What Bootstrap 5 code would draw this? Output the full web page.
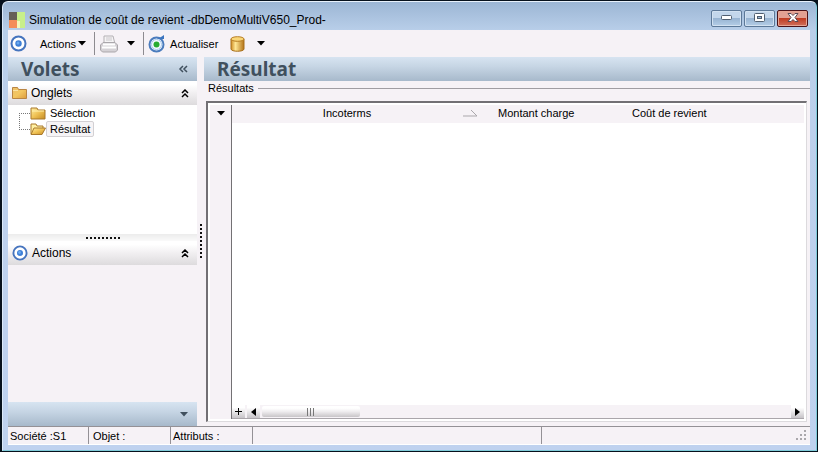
<!DOCTYPE html>
<html lang="fr">
<head>
<meta charset="utf-8">
<meta name="viewport" content="width=device-width, initial-scale=1">
<title>Simulation de coût de revient</title>
<link href="https://cdn.jsdelivr.net/npm/bootstrap@5.3.0/dist/css/bootstrap.min.css" rel="stylesheet">
<style>
body{background:#07111c;font:11px/16px "Liberation Sans",Arial,sans-serif;color:#000;padding:1px 1px 1px 2px}
svg{display:block;flex:none}
button{border:0;padding:0;background:none;color:inherit;font:inherit}
.app-window{background:linear-gradient(#9cb6d4 0,#b8cee9 28px,#bcd0ec 118px,#bfd2ef);border-radius:6px 6px 0 0;border:1px solid #7fcbd9;border-top-color:#e8f1fb;border-left-color:#dce9f8;padding:0 6px 5px 5px}
.title-bar{height:28px;font-size:12px;padding:0 2px 0 1px}
.title-bar h1{font:inherit;margin:0}
.win-btns{gap:2px}
.win-btn{width:31px;height:17px;border:1px solid #5c7898;border-radius:2px;background:linear-gradient(#c3d6eb 0 48%,#98b4d2 50%,#b4cde7);box-shadow:inset 0 0 0 1px #d2e1f1}
.win-close{border-color:#4b1218;background:linear-gradient(#e2a092 0 45%,#c03c22 50%,#d0705c);box-shadow:inset 0 0 0 1px #e6a594}
.surface{background:#f6f2f6}
.tool-bar{height:27px;padding-left:2px}
.menu-btn{margin-left:13px;gap:2px}
.tool-sep{width:1px;height:23px;background:#8d8b90}
.head-band{height:24px;background:linear-gradient(#d7e4f1,#c6d5e4 40%,#a7b9cb);color:#40505e}
.head-band h2{font:bold 19px/24px "Noto Sans","Open Sans",sans-serif;margin:0 0 0 5px}
.side{width:189px}
.group-head{height:24px;background:linear-gradient(#fff 15%,#f1eff1 50%,#dddbdd);font-size:12px}
.group-head h3{font:inherit;margin:0}
.tree-area{height:129px}
.tree-list{margin:0 0 0 11px;padding:0;list-style:none}
.tree-list li{height:16px}
.tree-list button{height:16px;padding:0 3px;border:1px solid transparent;line-height:14px;border-radius:2px}
.tree-list button.current{background:#f6f4f6;border-color:#d3d0d3}
.h-grip{height:7px;background:linear-gradient(#ececec,#fafafa)}
.v-grip{width:7px}
.results{margin:6px 3px 4px 2px;border:solid;border-width:2px 1px 1px 2px;border-color:#727074 #dcdadd #dcdadd #727074;padding:2px}
.legend-text{height:14px;line-height:14px}
.legend-line{height:1px;background:#a09da2}
.row-strip{width:22px;border-right:1px solid #737174;padding-top:6px}
.grid-table{table-layout:fixed;line-height:16px}
.grid-table th{font-weight:400;padding:0 0 2px;background:#f6f2f6;height:18px}
.col-terms{width:254px}
.col-amount{width:134px}
.scroll-row{height:14px;border-bottom:1px solid #aaa6ab}
.mini-btn{width:13px;height:13px;background:linear-gradient(#fff 20%,#c7c4c8);display:grid;place-items:center}
.slide-left{margin-left:2px}
.thumb{width:98px;height:11px;background:linear-gradient(#fff 20%,#efedef 50%,#c8c5c8);border-radius:2px;margin-left:2px}
.status{height:19px;border-top:1px solid #949196;border-bottom:1px solid #fff;line-height:18px}
.status>div{border-left:1px solid #949196;padding-left:2px}
.status>.s-one{width:80px;border-left:0}.s-two{width:82px}.s-three{width:82px}.s-four{width:289px}
</style>
<script src="https://cdn.jsdelivr.net/npm/bootstrap@5.3.0/dist/js/bootstrap.bundle.min.js"></script>
</head>
<body class="vh-100 overflow-hidden d-flex">
<svg width="0" height="0" class="position-absolute" aria-hidden="true">
<defs>
<linearGradient id="gold" x1="0" y1="0" x2="1" y2="1"><stop stop-color="#fff0a2"/><stop offset=".5" stop-color="#efc154"/><stop offset="1" stop-color="#c58b22"/></linearGradient>
<linearGradient id="amber" x1="0" y1="0" x2="1" y2="1"><stop stop-color="#ecc069"/><stop offset=".5" stop-color="#f3c660"/><stop offset="1" stop-color="#dd9c3c"/></linearGradient>
<linearGradient id="drum" x1="0" x2="1"><stop stop-color="#cf8d24"/><stop offset=".35" stop-color="#ffe795"/><stop offset="1" stop-color="#b47317"/></linearGradient>
<symbol id="target" viewBox="0 0 17 17"><circle cx="8.500" cy="8.500" r="7" fill="#fff" stroke="#4674be" stroke-width="2"/><circle cx="8.500" cy="8.500" r="3.200" fill="#3f7fd6"/><circle cx="8" cy="8" r="1.500" fill="#69a9ef"/></symbol>
<symbol id="folder" viewBox="0 0 16 14"><path d="M1 3V2h6l1 2h7v9H1z" fill="url(#gold)" stroke="#a9792c"/><path d="M2 5h12" stroke="#fff1b2"/></symbol>
<symbol id="dblup" viewBox="0 0 7 9"><path d="M0.500 4 3.500 1 6.500 4M0.500 8 3.500 5 6.500 8" fill="none" stroke="#000" stroke-width="1.500"/></symbol>
<symbol id="down" viewBox="0 0 8 5"><path d="M0 0h8L4 4.500z" fill="currentColor"/></symbol>
</defs>
</svg>
<main class="app-window flex-fill d-flex flex-column">
<header class="title-bar d-flex align-items-center">
<svg width="16" height="16" class="mt-2 me-1"><path d="M0 0h8v8H0z" fill="#665f58"/><path d="M0 8h8v8H0z" fill="#f58e59"/><path d="M8 0h8v16H8z" fill="#c8ef8a"/><path d="M8 9h3v7H8z" fill="#f6f8ba"/></svg>
<h1 class="mt-2 flex-fill">Simulation de coût de revient -dbDemoMultiV650_Prod-</h1>
<div class="win-btns d-flex mt-1">
<button class="win-btn d-grid" aria-label="Réduire"><svg class="m-auto" width="12" height="6"><rect x=".5" y=".5" width="10" height="4" rx="1" fill="#fff" stroke="#505e70"/></svg></button>
<button class="win-btn d-grid" aria-label="Agrandir"><svg class="m-auto" width="12" height="10"><rect x=".5" y=".5" width="10" height="8" rx="1" fill="#fff" stroke="#505e70"/><rect x="3.500" y="3.500" width="4" height="2" fill="#9db8d6" stroke="#505e70"/></svg></button>
<button class="win-btn win-close d-grid" aria-label="Fermer"><svg class="m-auto" width="12" height="10"><path d="M1 .5h3l2 2 2-2h3L8 4.500l3 4H8l-2-2-2 2H1l3-4z" fill="#fff" stroke="#594a55"/></svg></button>
</div>
</header>
<div class="surface flex-fill d-flex flex-column">
<nav class="tool-bar d-flex align-items-center" aria-label="Outils">
<button class="d-flex align-items-center" aria-label="Cible"><svg width="17" height="17"><use href="#target"/></svg></button>
<button class="menu-btn d-flex align-items-center">Actions<svg width="8" height="5"><use href="#down"/></svg></button>
<span class="tool-sep ms-2"></span>
<button class="ms-1" aria-label="Imprimer"><svg width="20" height="18"><path d="M5 9V1h9l2 8z" fill="#f5f4f5" stroke="#b3b0b4"/><path d="M7 3h6M7 5h6" stroke="#cac7cb"/><path d="M1.500 10 4 7.500h12l2.500 2.500v5l-2 2h-13l-2-2z" fill="#d5d2d6" stroke="#aaa7ab"/><path d="M4 9.500h12M3 12.500h14" stroke="#fff" stroke-width="2"/></svg></button>
<button class="ms-2" aria-label="Options d’impression"><svg width="8" height="5"><use href="#down"/></svg></button>
<span class="tool-sep ms-2 me-1"></span>
<button class="d-flex align-items-center gap-1"><svg width="18" height="18"><circle cx="8.500" cy="9.500" r="7" fill="#f6faff" stroke="#4b7cbd" stroke-width="2"/><circle cx="8.500" cy="9.500" r="5" fill="none" stroke="#a7c9ec"/><circle cx="8.500" cy="9.500" r="3" fill="#28ac31"/><path d="M9 4h7V0l-3 2z" fill="#3b75bf"/></svg>Actualiser</button>
<button class="ms-2 ps-1" aria-label="Base de données"><svg width="15" height="16"><path d="M1 3v10c0 3 13 3 13 0V3z" fill="url(#drum)" stroke="#a8701c"/><ellipse cx="7.500" cy="3" rx="6.500" ry="2.300" fill="#f9d678" stroke="#b77d23"/></svg></button>
<button class="ms-2 ps-1" aria-label="Options des données"><svg width="8" height="5"><use href="#down"/></svg></button>
</nav>
<div class="d-flex flex-fill">
<aside class="side d-flex flex-column flex-shrink-0">
<div class="head-band d-flex align-items-center ps-2"><h2 class="flex-fill">Volets</h2><button class="me-2" aria-label="Masquer"><svg width="11" height="8"><path d="m5 1-3 3 3 3M9 1 6 4l3 3" fill="none" stroke="#40505e" stroke-width="1.500"/></svg></button></div>
<div class="group-head d-flex align-items-center px-1 gap-1"><svg width="15" height="14"><path d="M.5 12.500v-11h5l1 2h8v9z" fill="url(#amber)" stroke="#b98543"/><path d="M1 4.500h5" stroke="#fbe3a2"/></svg><h3 class="flex-fill">Onglets</h3><button class="me-1" aria-label="Replier les onglets"><svg width="8" height="9"><use href="#dblup"/></svg></button></div>
<div class="tree-area bg-white">
<ul class="tree-list">
<li class="d-flex align-items-center"><svg width="11" height="16"><path d="M.5 8v8M0 8.500h11" stroke="#777" stroke-dasharray="1 1"/></svg><svg width="16" height="14"><use href="#folder"/></svg><button class="ms-0">Sélection</button></li>
<li class="d-flex align-items-center"><svg width="11" height="16"><path d="M.5 0v8M0 8.500h11" stroke="#777" stroke-dasharray="1 1"/></svg><svg width="16" height="14"><path d="M1 12V2h5l1 2h6v3" fill="#fff0a2" stroke="#a9792c"/><path d="M1 12.500 4 6h11.500L12 12.500z" fill="url(#gold)" stroke="#a9792c"/></svg><button class="current">Résultat</button></li>
</ul>
</div>
<div class="h-grip d-grid"><svg class="m-auto" width="36" height="2"><path d="M1 1h35" stroke="#111" stroke-width="2" stroke-dasharray="2 2"/></svg></div>
<div class="group-head d-flex align-items-center px-1 gap-1"><svg width="16" height="16"><use href="#target"/></svg><h3 class="flex-fill">Actions</h3><button class="me-1" aria-label="Replier les actions"><svg width="8" height="9"><use href="#dblup"/></svg></button></div>
<div class="flex-fill"></div>
<div class="head-band d-flex align-items-center justify-content-end"><button class="me-2" aria-label="Plus de volets"><svg width="10" height="5"><use href="#down"/></svg></button></div>
</aside>
<div class="v-grip d-grid flex-shrink-0"><svg class="m-auto" width="2" height="36"><path d="M1 0v36" stroke="#111" stroke-width="2" stroke-dasharray="2 2"/></svg></div>
<section class="flex-fill d-flex flex-column">
<div class="head-band d-flex ps-2"><h2>Résultat</h2></div>
<div class="d-flex align-items-center ps-1 gap-1"><div class="legend-text">Résultats</div><div class="legend-line flex-fill"></div></div>
<div class="results bg-white flex-fill d-flex">
<div class="row-strip surface d-flex flex-shrink-0 justify-content-center align-items-start"><button class="d-flex" aria-label="Options de la grille"><svg width="8" height="5"><use href="#down"/></svg></button></div>
<div class="flex-fill d-flex flex-column">
<table class="grid-table w-100">
<colgroup><col class="col-terms"><col class="col-amount"><col></colgroup>
<thead><tr><th><div class="d-flex align-items-center me-2"><span class="w-100 text-center">Incoterms</span><svg width="16" height="8"><path d="m9 1 6 6H1" fill="none" stroke="#aaa7ab"/></svg></div></th><th class="ps-2"><span class="ps-1">Montant charge</span></th><th class="ps-2"><span class="ps-1">Coût de revient</span></th></tr></thead>
</table>
<div class="flex-fill"></div>
<div class="scroll-row surface d-flex align-items-center">
<button class="mini-btn" aria-label="Ajouter"><svg width="7" height="7"><path d="M3.500 0v7M0 3.500h7" stroke="#000"/></svg></button>
<button class="mini-btn slide-left" aria-label="Défiler à gauche"><svg width="5" height="8"><path d="M5 0v8L0 4z"/></svg></button>
<div class="thumb d-grid"><svg class="m-auto" width="8" height="8"><path d="M.5 0v8M3.500 0v8M6.500 0v8" stroke="#777"/></svg></div>
<button class="mini-btn ms-auto" aria-label="Défiler à droite"><svg width="5" height="8"><path d="M0 0v8l5-4z"/></svg></button>
</div>
</div>
</div>
</section>
</div>
<footer class="status d-flex">
<div class="s-one">Société :S1</div><div class="s-two ps-1">Objet :</div><div class="s-three">Attributs :</div><div class="s-four"></div><div class="flex-fill d-flex justify-content-end align-items-end pb-1 pe-1"><svg width="10" height="10"><path d="M8 0h2v2H8zM4 4h2v2H4zM8 4h2v2H8zM0 8h2v2H0zM4 8h2v2H4zM8 8h2v2H8z" fill="#aaa7ab"/></svg></div>
</footer>
</div>
</main>
</body>
</html>
